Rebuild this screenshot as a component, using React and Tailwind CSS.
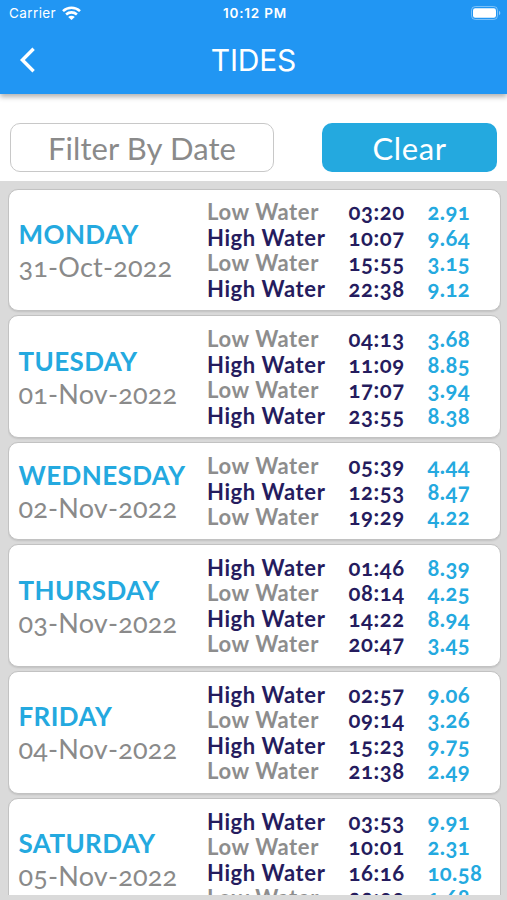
import clsx from 'clsx';

const days = [
  {
    name: 'MONDAY',
    date: '31-Oct-2022',
    tides: [
      ['Low', '03:20', '2.91'],
      ['High', '10:07', '9.64'],
      ['Low', '15:55', '3.15'],
      ['High', '22:38', '9.12'],
    ],
  },
  {
    name: 'TUESDAY',
    date: '01-Nov-2022',
    tides: [
      ['Low', '04:13', '3.68'],
      ['High', '11:09', '8.85'],
      ['Low', '17:07', '3.94'],
      ['High', '23:55', '8.38'],
    ],
  },
  {
    name: 'WEDNESDAY',
    date: '02-Nov-2022',
    tides: [
      ['Low', '05:39', '4.44'],
      ['High', '12:53', '8.47'],
      ['Low', '19:29', '4.22'],
    ],
  },
  {
    name: 'THURSDAY',
    date: '03-Nov-2022',
    tides: [
      ['High', '01:46', '8.39'],
      ['Low', '08:14', '4.25'],
      ['High', '14:22', '8.94'],
      ['Low', '20:47', '3.45'],
    ],
  },
  {
    name: 'FRIDAY',
    date: '04-Nov-2022',
    tides: [
      ['High', '02:57', '9.06'],
      ['Low', '09:14', '3.26'],
      ['High', '15:23', '9.75'],
      ['Low', '21:38', '2.49'],
    ],
  },
  {
    name: 'SATURDAY',
    date: '05-Nov-2022',
    tides: [
      ['High', '03:53', '9.91'],
      ['Low', '10:01', '2.31'],
      ['High', '16:16', '10.58'],
      ['Low', '22:33', '1.68'],
    ],
  },
];

const StatusBar = () => (
  <div className="grid h-7 grid-cols-3 items-center pl-[9px] pr-[6px] font-[Inter,sans-serif] text-[13.5px] leading-none">
    <div className="flex items-center gap-[6px]">
      <span className="tracking-[0.4px]">Carrier</span>
      <svg className="mb-[2px]" width="19" height="14" viewBox="0 0 19 14" fill="none" stroke="white" strokeWidth="2.6">
        <path d="M1 5.1C5.8.6 13.2.6 18 5.1" />
        <path d="M4.1 8.5c3.1-2.8 7.7-2.8 10.8 0" />
        <path d="M9.5 14 6.2 10.9c1.9-1.7 4.7-1.7 6.6 0z" fill="white" stroke="none" />
      </svg>
    </div>
    <span className="text-center font-semibold tracking-[0.8px] whitespace-nowrap">10:12 PM</span>
    <svg className="mb-[2px] justify-self-end" width="30" height="14" viewBox="0 0 30 14">
      <rect x="0.5" y="0.5" width="26" height="13" rx="3.8" fill="none" stroke="white" strokeOpacity="0.4" />
      <rect x="2" y="2.2" width="23" height="9.6" rx="2.2" fill="white" />
      <path d="M28 4.8c1.8.7 1.8 3.7 0 4.4z" fill="white" fillOpacity="0.5" />
    </svg>
  </div>
);

const Header = () => (
  <header className="relative z-10 h-[94px] shrink-0 bg-[#2196f3] text-white shadow-[0_3px_5px_rgba(0,0,0,0.3)]">
    <StatusBar />
    <div className="grid h-[64px] grid-cols-[1fr_auto_1fr] items-center">
      <button className="ml-[19px] w-[16px]">
        <svg width="17" height="26" viewBox="0 0 17 26" fill="none" stroke="white" strokeWidth="3.4">
          <path d="M14.6 1.8 3.4 13l11.2 11.2" />
        </svg>
      </button>
      <h1 className="font-[Inter,sans-serif] text-[30px] leading-none font-normal tracking-[-0.2px]">TIDES</h1>
    </div>
  </header>
);

const TideRow = ({ tide: [level, time, height] }) => {
  const high = level === 'High';
  return (
    <li className="grid h-[25.6px] grid-cols-[141.5px_79px_1fr] items-center text-[22px] leading-none font-bold">
      <span
        className={clsx(
          'whitespace-nowrap tracking-[0.6px]',
          high ? 'text-[#251c5e]' : 'text-[#8d8d8d]'
        )}
      >
        {level} Water
      </span>
      <span className="tracking-[0.6px] text-[#251c5e]">{time}</span>
      <span className="tracking-[0.4px] text-[#24a9df]">{height}</span>
    </li>
  );
};

const DayCard = ({ day }) => (
  <article className="flex shrink-0 items-center rounded-[10px] border border-[#c2c2c2] bg-white pt-[10px] pb-[8.6px] pl-[10px] shadow-[0_1px_2px_rgba(0,0,0,0.12)]">
    <div className="w-[188.5px] shrink-0">
      <h2 className="text-[26px] leading-[32px] font-bold tracking-[0.4px] text-[#24a9df]">{day.name}</h2>
      <p className="text-[27px] leading-[33px] tracking-[0.2px] text-[#8a8a8a]">{day.date}</p>
    </div>
    <ul className="flex-1">
      {day.tides.map((tide) => (
        <TideRow key={tide[1]} tide={tide} />
      ))}
    </ul>
  </article>
);

const App = () => (
  <div className="flex h-[900px] w-[507px] flex-col overflow-hidden bg-white font-[Lato,sans-serif] oldstyle-nums">
    <Header />

    {/* Filter bar */}
    <div className="flex h-[87px] shrink-0 items-end justify-between px-[10px] pb-[9px] text-[31px] leading-none">
      <button className="h-[49px] w-[264px] rounded-[10px] border-[1.5px] border-[#c8c8c8] pt-[2px] tracking-[0.1px] text-[#8a8a8a]">
        Filter By Date
      </button>
      <button className="h-[49px] w-[175px] rounded-[10px] bg-[#24a9df] pt-[2px] tracking-[0.6px] text-white">
        Clear
      </button>
    </div>

    {/* Tide list */}
    <main className="min-h-0 flex-1 bg-[#dadada] pr-[6.5px] pb-[5px] pl-[7.5px]">
      <div className="flex h-full flex-col gap-[4px] overflow-hidden pt-[7.5px]">
        {days.map((day) => (
          <DayCard key={day.date} day={day} />
        ))}
      </div>
    </main>
  </div>
);

export default App;
